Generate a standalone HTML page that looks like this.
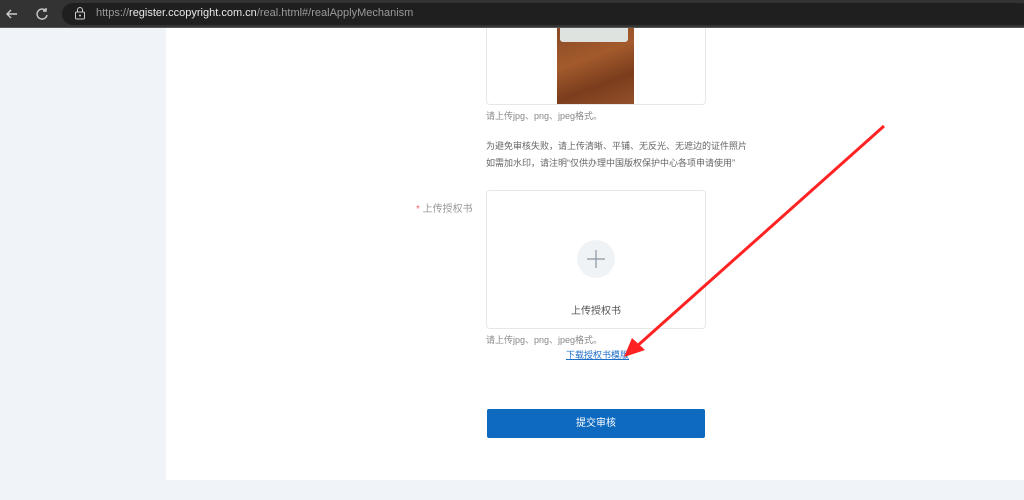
<!DOCTYPE html><html><head><meta charset="utf-8"><style>
body{margin:0;width:1024px;height:500px;position:relative;overflow:hidden;background:#f0f4f8;font-family:"Liberation Sans","Noto Sans CJK SC",sans-serif}
.bar{position:absolute;left:0;top:0;width:1024px;height:28px;background:#333;z-index:10;border-bottom:1px solid #555;box-sizing:border-box}
.pill{position:absolute;left:62px;top:3px;width:970px;height:22px;border-radius:12px;background:#1f1f1f}
.url{position:absolute;left:96px;top:7px;font-size:11px;color:#9a9a9a}
.url b{color:#e8e8e8;font-weight:normal}
.main{position:absolute;left:166px;top:28px;width:858px;height:452px;background:#fff}
.t{position:absolute;font-size:9px;color:#888}
.box{position:absolute;border:1px solid #e4e8eb;border-radius:4px;background:#fff}
</style></head><body>
<div class="main"></div>
<div class="box" style="left:486px;top:10px;width:218px;height:93px"></div>
<div style="position:absolute;left:557px;top:28px;width:77px;height:76px;background:linear-gradient(160deg,#8a4a25,#a35a2c 40%,#7a3d1d 70%,#94502a)"></div>
<div style="position:absolute;left:560px;top:28px;width:68px;height:14px;background:#dfe3df;border-radius:0 0 3px 3px"></div>
<div class="t" style="left:486px;top:109px">请上传jpg、png、jpeg格式。</div>
<div class="t" style="left:486px;top:139px;color:#666">为避免审核失败，请上传清晰、平铺、无反光、无遮边的证件照片</div>
<div class="t" style="left:486px;top:156px;color:#666">如需加水印，请注明“仅供办理中国版权保护中心各项申请使用”</div>
<div class="t" style="left:416px;top:200px;font-size:10px;color:#999"><span style="color:#f56c6c">*</span> 上传授权书</div>
<div class="box" style="left:486px;top:190px;width:218px;height:137px"></div>
<div style="position:absolute;left:577px;top:240px;width:38px;height:38px;border-radius:50%;background:#f0f3f5"></div>
<svg style="position:absolute;left:586px;top:249px" width="20" height="20"><path d="M10 1v18M1 10h18" stroke="#8a96a3" stroke-width="1.2"/></svg>
<div class="t" style="left:571px;top:302px;font-size:10px;color:#555">上传授权书</div>
<div class="t" style="left:486px;top:333px">请上传jpg、png、jpeg格式。</div>
<div class="t" style="left:566px;top:348px;color:#1e6ec8;text-decoration:underline">下载授权书模版</div>
<div style="position:absolute;left:487px;top:409px;width:218px;height:29px;background:#0d6abf;border-radius:2px;color:#fff;font-size:10px;text-align:center;line-height:29px">提交审核</div>
<svg style="position:absolute;left:0;top:0" width="1024" height="500"><path d="M884 126L636 347" stroke="#f22" stroke-width="3"/><path d="M624 357L632 338L645 350Z" fill="#f22"/></svg>
<div class="bar"><div class="pill"></div>
<svg style="position:absolute;left:4px;top:6px" width="16" height="16"><path d="M13 8H3M7 4L3 8l4 4" stroke="#ccc" stroke-width="1.4" fill="none"/></svg>
<svg style="position:absolute;left:34px;top:6px" width="16" height="16"><path d="M12 5A5 5 0 1 0 13 9M12 2v3H9" stroke="#ccc" stroke-width="1.4" fill="none"/></svg>
<svg style="position:absolute;left:74px;top:7px" width="12" height="14"><rect x="1.5" y="5" width="9" height="7" rx="1" stroke="#ccc" fill="none"/><path d="M3.5 5V3a2.5 2.5 0 0 1 5 0v2" stroke="#ccc" fill="none"/><circle cx="6" cy="8.5" r="1" fill="#ccc"/></svg>
<div class="url">https://<b>register.ccopyright.com.cn</b>/real.html#/realApplyMechanism</div></div>
</body></html>
